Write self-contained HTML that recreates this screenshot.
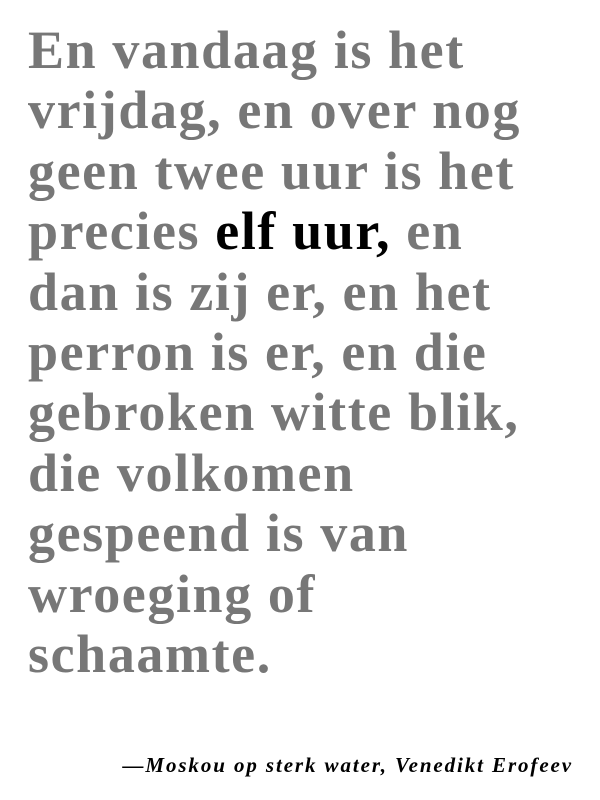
<!DOCTYPE html>
<html><head><meta charset="utf-8"><style>
html,body{margin:0;padding:0;background:#fff;width:600px;height:800px;overflow:hidden}
.q{position:absolute;left:28px;top:20px;font-family:"Liberation Serif",serif;font-weight:bold;font-size:54px;letter-spacing:1.6px;line-height:60.4px;color:#777;white-space:nowrap}
.q b{color:#000}
.a{position:absolute;right:27px;top:753px;font-family:"Liberation Serif",serif;font-weight:bold;font-style:italic;font-size:21px;letter-spacing:1.9px;color:#000;white-space:nowrap}
</style></head><body>
<div class="q">En vandaag is het<br>vrijdag, en over nog<br>geen twee uur is het<br>precies <b>elf uur,</b> en<br>dan is zij er, en het<br>perron is er, en die<br>gebroken witte blik,<br>die volkomen<br>gespeend is van<br>wroeging of<br>schaamte.</div>
<div class="a">—Moskou op sterk water, Venedikt Erofeev</div>
</body></html>
